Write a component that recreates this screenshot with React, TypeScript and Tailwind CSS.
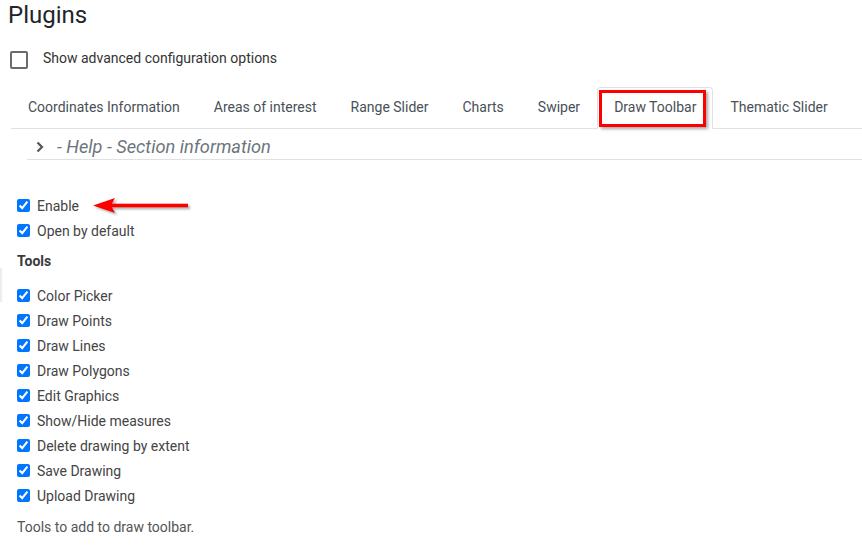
import React from "react";

const tabs = [
  "Coordinates Information",
  "Areas of interest",
  "Range Slider",
  "Charts",
  "Swiper",
  "Draw Toolbar",
  "Thematic Slider",
];

const tools = [
  "Color Picker",
  "Draw Points",
  "Draw Lines",
  "Draw Polygons",
  "Edit Graphics",
  "Show/Hide measures",
  "Delete drawing by extent",
  "Save Drawing",
  "Upload Drawing",
];

function Check({ label }: { label: string }) {
  return (
    <label className="flex items-center h-[25px]">
      <input
        type="checkbox"
        defaultChecked
        className="m-0 ml-[4px] mr-[7px] w-[13px] h-[13px] accent-[#0075ff]"
      />
      <span className="text-[14px] leading-[20px] text-[#444]">{label}</span>
    </label>
  );
}

export default function App() {
  return (
    <div className="relative w-[862px] h-[550px] bg-white overflow-hidden font-['Roboto',sans-serif]">
      <h1 className="pl-2 text-[24px] leading-[30px] text-[#212529] font-normal">Plugins</h1>

      <div className="mt-[21px] flex items-center h-[18px]">
        <div className="ml-[10px] w-[18px] h-[18px] border-2 border-[#6b6b6b] rounded-[2px]" />
        <span className="ml-[15px] -mt-[4px] text-[14px] leading-[20px] text-[#333]">
          Show advanced configuration options
        </span>
      </div>

      <div className="ml-[11px] mt-[18px] flex border-b border-[#dee2e6]">
        {tabs.map((t) => {
          const active = t === "Draw Toolbar";
          return (
            <div
              key={t}
              className={
                active
                  ? "relative -mb-px border border-[#dee2e6] border-b-white bg-white rounded-t-[4px] px-4 pt-[9px] pb-[11px] text-[14px] leading-[20px] text-[#495057]"
                  : "relative -mb-px border border-transparent px-4 pt-[9px] pb-[11px] text-[14px] leading-[20px] text-[#495057]"
              }
            >
              {t}
              {active && (
                <div className="absolute left-[1px] top-[2px] right-[6px] bottom-[1px] border-[3px] border-[#ff0000] shadow-[2px_2px_3px_rgba(0,0,0,0.35)]" />
              )}
            </div>
          );
        })}
      </div>

      <div className="ml-[27px] h-[31px] flex items-center pt-[5px] border-b border-[#dee2e6]">
        <svg width="16" height="16" viewBox="0 0 16 16" className="ml-[5px]">
          <path d="M5.5 3.5 L10 8 L5.5 12.5" fill="none" stroke="#555" strokeWidth="2.2" />
        </svg>
        <span className="ml-[9px] text-[18.2px] leading-[24px] italic text-[#6c757d]">
          - Help - Section information
        </span>
      </div>

      <div className="ml-[13px] mt-[33px]">
        <Check label="Enable" />
        <Check label="Open by default" />
        <div className="mt-[6px] h-[25px] flex items-center ml-[4px] text-[14px] font-bold text-[#3a3a3a]">
          Tools
        </div>
        <div className="mt-[9px]">
          {tools.map((t) => (
            <Check key={t} label={t} />
          ))}
        </div>
        <div className="mt-[7px] h-[25px] flex items-center ml-[4px] text-[14px] text-[#555]">
          Tools to add to draw toolbar.
        </div>
      </div>

      <svg
        width="100"
        height="20"
        viewBox="0 0 100 20"
        className="absolute left-[92px] top-[197px] [filter:drop-shadow(2px_2px_1px_rgba(0,0,0,0.3))]"
      >
        <polygon points="1,8.5 23,1 19,8.5 23,16" fill="#ff0000" />
        <rect x="18" y="6.7" width="78" height="3.6" fill="#ff0000" />
      </svg>

      <div className="absolute left-0 top-[268px] w-[3px] h-[34px] bg-gradient-to-r from-[#e6e6e6] to-transparent" />
    </div>
  );
}
